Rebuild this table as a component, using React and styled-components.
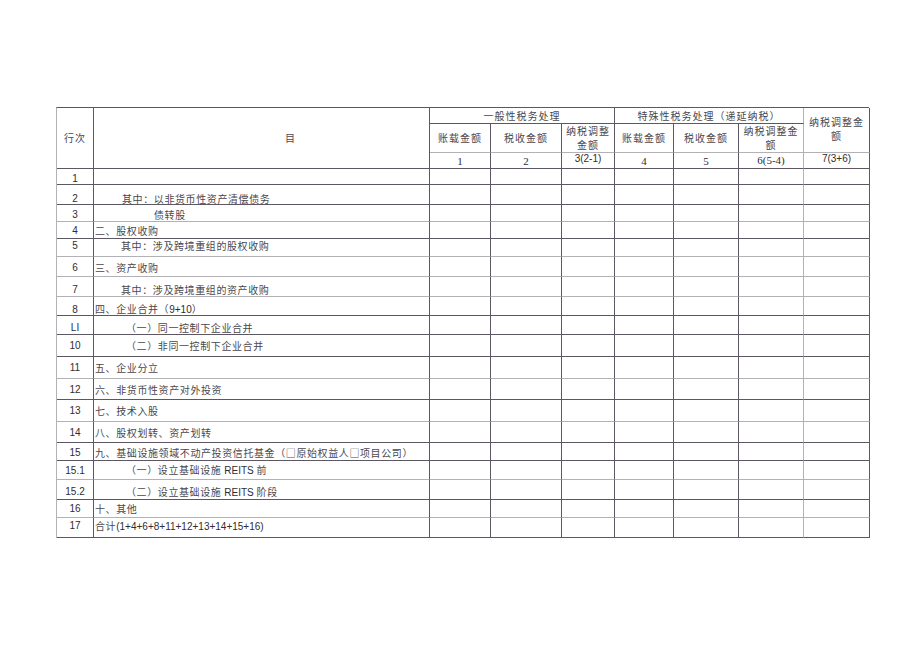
import React from 'react';
import styled, { createGlobalStyle } from 'styled-components';

const DARK = '#5d5763';
const LIGHT = '#b3b1b5';

const GlobalStyle = createGlobalStyle`
  html, body {
    margin: 0;
    padding: 0;
    background: #fff;
  }
`;

const Page = styled.div`
  width: 920px;
  height: 651px;
  padding: 107px 0 0 56px;
  box-sizing: border-box;
  font-family: "Noto Sans CJK SC", "Liberation Serif", serif;
  color: #4a474d;
`;

const Sheet = styled.div`
  display: grid;
  width: 813px;
  grid-template-columns: 37px 336px 61px 71px 53px 59px 65px 65px 66px;
  grid-template-rows: 16px 29px 16px ${(p) => p.$rows};
  border-top: 1px solid ${DARK};
  border-left: 1px solid ${LIGHT};
  box-sizing: border-box;
`;

const Cell = styled.div`
  box-sizing: border-box;
  display: flex;
  align-items: center;
  justify-content: ${(p) => (p.$left ? 'flex-start' : 'center')};
  text-align: center;
  padding: ${(p) => (p.$off > 0 ? p.$off * 2 : 0)}px 0
    ${(p) => (p.$off < 0 ? -p.$off * 2 : 0)}px ${(p) => p.$indent || 0}px;
  border-right: 1px solid ${(p) => p.$rightLine || DARK};
  border-bottom: 1px solid ${(p) => p.$line || DARK};
  grid-column: ${(p) => p.$col || 'auto'};
  grid-row: ${(p) => p.$row || 'auto'};
  font-size: 10px;
  letter-spacing: 1px;
  line-height: 13px;
  white-space: nowrap;
  overflow: hidden;
`;

const HeadText = styled.span`
  font-size: 10px;
  letter-spacing: 1px;
  line-height: 14px;
`;

const Num = styled.span`
  font-family: ${(p) => (p.$serif ? '"Liberation Serif", serif' : '"Liberation Sans", sans-serif')};
  font-size: ${(p) => (p.$serif ? 11 : 10)}px;
  letter-spacing: 0;
  color: #2f2d32;
  position: relative;
  top: ${(p) => p.$lift || 0}px;
`;

const ItemText = styled.span`
  font-size: 10px;
  letter-spacing: 0.6px;
`;

const Latin = styled.span`
  font-family: "Liberation Sans", sans-serif;
  font-size: 10px;
  letter-spacing: 0;
  color: #2f2d32;
`;

const rows = [
  { no: '1', text: '', indent: 0, h: 16, off: 2, line: DARK },
  { no: '2', text: '其中：以非货币性资产清偿债务', indent: 28, h: 20, off: 4, line: DARK },
  { no: '3', text: '债转股', indent: 60, h: 17, off: 1.5, line: LIGHT },
  { no: '4', text: '二、股权收购', indent: 1, h: 17, off: 0, line: DARK },
  { no: '5', text: '其中：涉及跨境重组的股权收购', indent: 27, h: 18, off: -2, line: LIGHT },
  { no: '6', text: '三、资产收购', indent: 1, h: 20, off: 1, line: LIGHT },
  { no: '7', text: '其中：涉及跨境重组的资产收购', indent: 27, h: 20, off: 3, line: LIGHT },
  { no: '8', text: ['四、企业合并（', '9+10', '）'], indent: 1, h: 19, off: 3, line: DARK },
  { no: 'LI', text: '（一）同一控制下企业合并', indent: 32, h: 19, off: 2.5, line: DARK },
  { no: '10', text: '（二）非同一控制下企业合并', indent: 32, h: 22, off: 0, line: DARK },
  { no: '11', text: '五、企业分立', indent: 1, h: 22, off: 0, line: LIGHT },
  { no: '12', text: '六、非货币性资产对外投资', indent: 1, h: 21, off: 0, line: DARK },
  { no: '13', text: '七、技术入股', indent: 1, h: 22, off: 0, line: LIGHT },
  { no: '14', text: '八、股权划转、资产划转', indent: 1, h: 21, off: 0, line: DARK },
  { no: '15', text: '九、基础设施领域不动产投资信托基金（□原始权益人□项目公司）', indent: 1, h: 18, off: 1, line: DARK },
  { no: '15.1', text: ['（一）设立基础设施 ', 'REITS', ' 前'], indent: 32, h: 19, off: 0, line: LIGHT },
  { no: '15.2', text: ['（二）设立基础设施 ', 'REITS', ' 阶段'], indent: 32, h: 20, off: 2, line: DARK },
  { no: '16', text: '十、其他', indent: 1, h: 18, off: 0, line: LIGHT },
  { no: '17', text: ['合计', '(1+4+6+8+11+12+13+14+15+16)', ''], indent: 1, h: 20, off: -2, line: DARK },
];

const amountCols = 7;

const renderText = (text) => {
  if (!Array.isArray(text)) return <ItemText>{text}</ItemText>;
  const [a, b, c] = text;
  return (
    <ItemText>
      {a}
      <Latin>{b}</Latin>
      {c}
    </ItemText>
  );
};

const App = () => {
  const rowTemplate = rows.map((r) => `${r.h}px`).join(' ');

  return (
    <Page>
      <GlobalStyle />
      <Sheet $rows={rowTemplate}>
        <Cell $col="1" $row="1 / 4"><HeadText>行次</HeadText></Cell>
        <Cell $col="2" $row="1 / 4" $indent={58}><HeadText>目</HeadText></Cell>
        <Cell $col="3 / 6" $row="1"><HeadText>一般性税务处理</HeadText></Cell>
        <Cell $col="6 / 9" $row="1" $rightLine={LIGHT}><HeadText>特殊性税务处理（递延纳税）</HeadText></Cell>
        <Cell $col="9" $row="1 / 3" $line={LIGHT} $off={-1}>
          <HeadText>纳税调整金<br />额</HeadText>
        </Cell>

        <Cell $col="3" $row="2" $line={LIGHT}><HeadText>账载金额</HeadText></Cell>
        <Cell $col="4" $row="2" $line={LIGHT}><HeadText>税收金额</HeadText></Cell>
        <Cell $col="5" $row="2" $line={LIGHT}><HeadText>纳税调整<br />金额</HeadText></Cell>
        <Cell $col="6" $row="2" $line={LIGHT}><HeadText>账载金额</HeadText></Cell>
        <Cell $col="7" $row="2" $line={LIGHT}><HeadText>税收金额</HeadText></Cell>
        <Cell $col="8" $row="2" $line={LIGHT} $rightLine={LIGHT}><HeadText>纳税调整金<br />额</HeadText></Cell>

        <Cell $col="3" $row="3"><Num $serif $lift={1}>1</Num></Cell>
        <Cell $col="4" $row="3"><Num $serif $lift={1}>2</Num></Cell>
        <Cell $col="5" $row="3"><Num $lift={-2}>3(2-1)</Num></Cell>
        <Cell $col="6" $row="3"><Num $serif $lift={1}>4</Num></Cell>
        <Cell $col="7" $row="3"><Num $serif $lift={1}>5</Num></Cell>
        <Cell $col="8" $row="3" $rightLine={LIGHT}><Num $serif>6(5-4)</Num></Cell>
        <Cell $col="9" $row="3"><Num $lift={-2}>7(3+6)</Num></Cell>

        {rows.map((r) => (
          <React.Fragment key={r.no}>
            <Cell $line={r.line} $off={r.off}><Num>{r.no}</Num></Cell>
            <Cell $line={r.line} $off={r.off} $left $indent={r.indent}>
              {renderText(r.text)}
            </Cell>
            {Array.from({ length: amountCols }).map((_, i) => (
              <Cell key={i} $line={r.line} $rightLine={i === 5 ? LIGHT : DARK} />
            ))}
          </React.Fragment>
        ))}
      </Sheet>
    </Page>
  );
};

export default App;
